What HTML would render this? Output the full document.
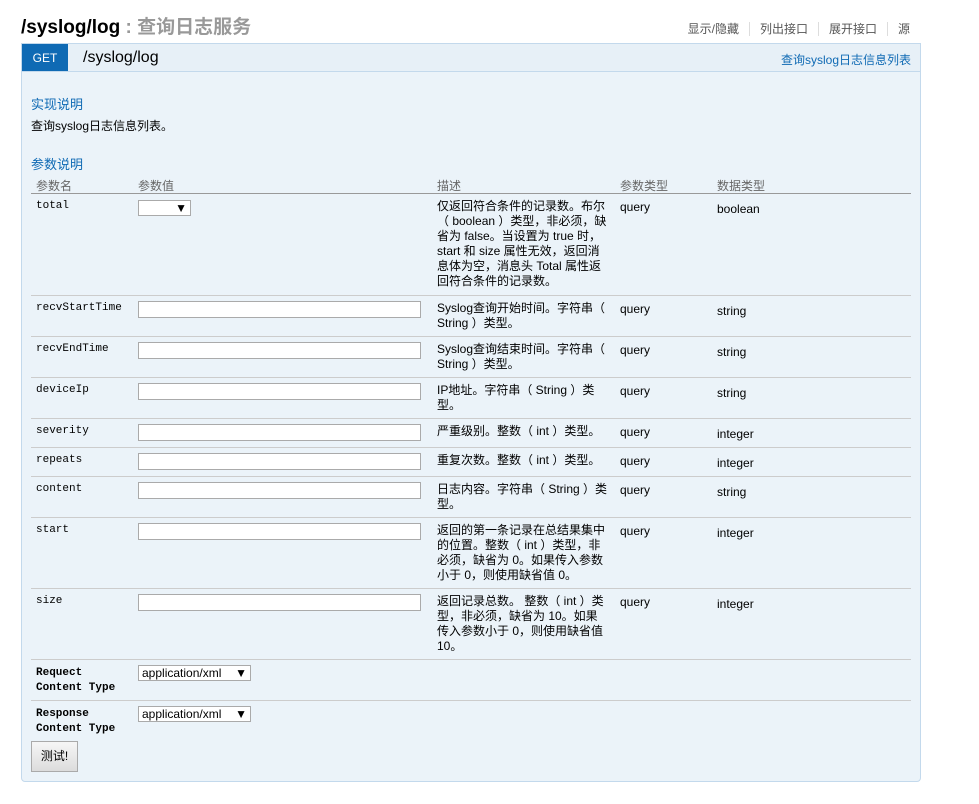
<!DOCTYPE html>
<html><head><meta charset="utf-8"><style>
body{margin:0;background:#fff;font-family:"Liberation Sans","Noto Sans CJK SC",sans-serif;font-size:12px;color:#000;width:979px;height:804px;overflow:hidden;position:relative}
.title{position:absolute;left:21px;top:12px;font-size:19px;font-weight:bold;color:#000}
.title span{color:#999}
.links{position:absolute;right:69px;top:20px;font-size:12px;color:#555}
.links span{padding:0 10px;border-right:1px solid #ddd}
.links span:last-child{border-right:none;padding-right:0}
.panel{position:absolute;left:21px;top:43px;width:898px;height:737px;background:#ebf3f9;border:1px solid #c3d9ec;border-radius:0 0 4px 4px}
.bar{position:absolute;left:0;top:0;width:898px;height:27px;background:#e7f0f7;border-bottom:1px solid #c3d9ec}
.get{position:absolute;left:0;top:0;width:46px;height:27px;background:#0f6ab4;color:#fff;text-align:center;line-height:28px;font-size:12px}
.path{position:absolute;left:61px;top:5px;font-size:16px}
.sum{position:absolute;right:9px;top:7px;color:#0f6ab4}
h4{position:absolute;margin:0;font-weight:normal;color:#0f6ab4;font-size:13px;left:9px}
.mono{font-family:"Liberation Mono","Noto Sans CJK SC",monospace;font-size:11px}
.row{position:absolute;left:9px;width:880px;border-bottom:1px solid #ccc}
.c{position:absolute;top:6px}
.n{left:5px}
.v{left:107px}
.d{left:406px;width:172px;line-height:15px;top:5px}
.p{left:589px}
.t{left:686px}
input.i{position:absolute;left:107px;top:5px;width:281px;height:15px;border:1px solid #aaa;background:#fff;padding:0;margin:0}
.sel{position:absolute;left:107px;top:6px;height:14px;border:1px solid #aaa;background:#fff;font-size:12px;line-height:14px;padding:0 3px}
.hd{color:#666}
</style></head><body>
<div class="title">/syslog/log <span>: 查询日志服务</span></div>
<div class="links"><span>显示/隐藏</span><span>列出接口</span><span>展开接口</span><span>源</span></div>
<div class="panel">
<div class="bar"><div class="get">GET</div><div class="path">/syslog/log</div><div class="sum">查询syslog日志信息列表</div></div>
<h4 style="top:50px">实现说明</h4>
<div style="position:absolute;left:9px;top:73px;font-size:12px">查询syslog日志信息列表。</div>
<h4 style="top:110px">参数说明</h4>
<div class="row hd" style="top:132px;height:17px;border-bottom:1px solid #999"><span class="c n" style="top:1px">参数名</span><span class="c v" style="top:1px">参数值</span><span class="c" style="left:406px;top:1px">描述</span><span class="c p" style="top:1px">参数类型</span><span class="c t" style="top:1px">数据类型</span></div>

<div class="row" style="top:150px;height:101px"><span class="c n mono">total</span><div class="sel" style="width:45px;text-align:right">▼</div><div class="c d">仅返回符合条件的记录数。布尔（ boolean ）类型，非必须，缺省为 false。当设置为 true 时，start 和 size 属性无效，返回消息体为空，消息头 Total 属性返回符合条件的记录数。</div><span class="c p">query</span><span class="c t" style="top:8px">boolean</span></div>
<div class="row" style="top:252px;height:40px"><span class="c n mono">recvStartTime</span><input class="i"><div class="c d">Syslog查询开始时间。字符串（ String ）类型。</div><span class="c p">query</span><span class="c t" style="top:8px">string</span></div>
<div class="row" style="top:293px;height:40px"><span class="c n mono">recvEndTime</span><input class="i"><div class="c d">Syslog查询结束时间。字符串（ String ）类型。</div><span class="c p">query</span><span class="c t" style="top:8px">string</span></div>
<div class="row" style="top:334px;height:40px"><span class="c n mono">deviceIp</span><input class="i"><div class="c d">IP地址。字符串（ String ）类型。</div><span class="c p">query</span><span class="c t" style="top:8px">string</span></div>
<div class="row" style="top:375px;height:28px"><span class="c n mono">severity</span><input class="i"><div class="c d">严重级别。整数（ int ）类型。</div><span class="c p">query</span><span class="c t" style="top:8px">integer</span></div>
<div class="row" style="top:404px;height:28px"><span class="c n mono">repeats</span><input class="i"><div class="c d">重复次数。整数（ int ）类型。</div><span class="c p">query</span><span class="c t" style="top:8px">integer</span></div>
<div class="row" style="top:433px;height:40px"><span class="c n mono">content</span><input class="i"><div class="c d">日志内容。字符串（ String ）类型。</div><span class="c p">query</span><span class="c t" style="top:8px">string</span></div>
<div class="row" style="top:474px;height:70px"><span class="c n mono">start</span><input class="i"><div class="c d">返回的第一条记录在总结果集中的位置。整数（ int ）类型，非必须，缺省为 0。如果传入参数小于 0，则使用缺省值 0。</div><span class="c p">query</span><span class="c t" style="top:8px">integer</span></div>
<div class="row" style="top:545px;height:70px"><span class="c n mono">size</span><input class="i"><div class="c d">返回记录总数。 整数（ int ）类型，非必须，缺省为 10。如果传入参数小于 0，则使用缺省值 10。</div><span class="c p">query</span><span class="c t" style="top:8px">integer</span></div>
<div class="row" style="top:616px;height:40px"><span class="c n mono" style="font-weight:bold;line-height:15px">Requect<br>Content Type</span><div class="sel" style="top:5px;width:105px">application/xml <span style="float:right">▼</span></div></div>
<div class="row" style="top:657px;height:40px;border-bottom:none"><span class="c n mono" style="font-weight:bold;line-height:15px">Response<br>Content Type</span><div class="sel" style="top:5px;width:105px">application/xml <span style="float:right">▼</span></div></div>
<div style="position:absolute;left:9px;top:697px;width:45px;height:29px;border:1px solid #aaa;background:linear-gradient(#f6f6f6,#dcdcdc);text-align:center;line-height:29px;font-size:12px">测试!</div>
</div>
</body></html>
